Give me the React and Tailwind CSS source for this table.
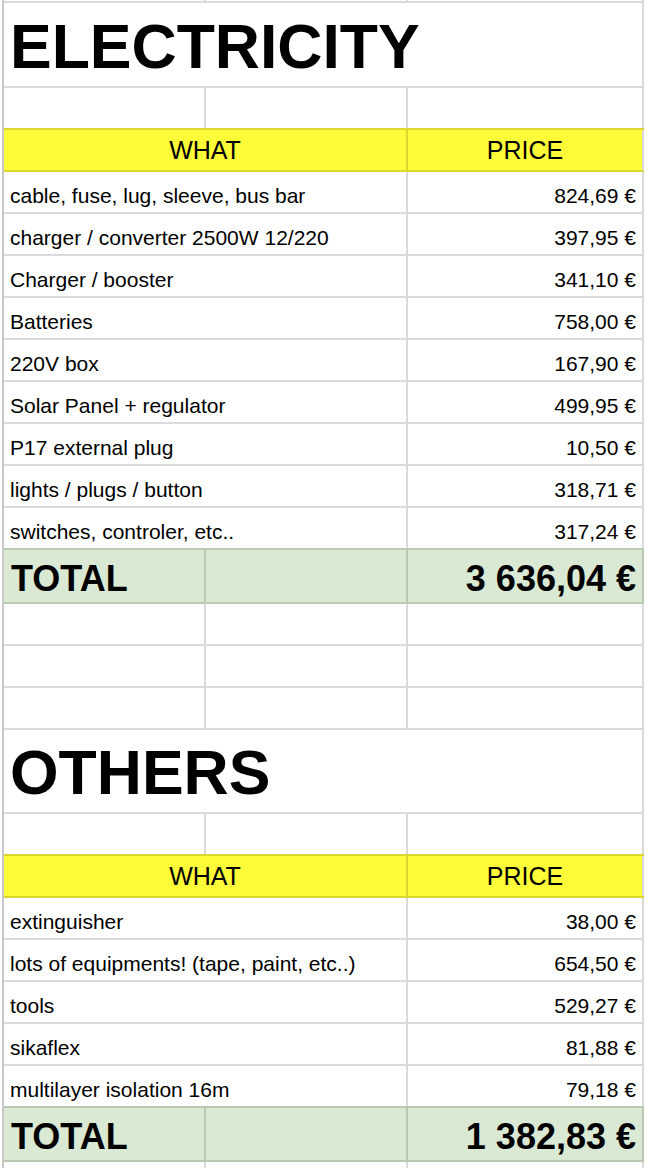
import React from "react";

const FONT = { fontFamily: '"Liberation Sans", Arial, sans-serif' };

const GRAY = "border-[#dadada]";
const YEL = "border-[#dcd62e]";
const GRN = "border-[#b9c9b2]";

function Blank({ h, bottom = GRAY }) {
  return (
    <div className={`flex border-b-2 ${bottom}`} style={{ height: h }}>
      <div className={`w-[202px] border-r-2 ${GRAY}`} />
      <div className={`w-[202px] border-r-2 ${GRAY}`} />
      <div className={`w-[236px] border-r-2 ${GRAY}`} />
    </div>
  );
}

function Title({ text, h }) {
  return (
    <div className={`flex border-b-2 ${GRAY}`} style={{ height: h }}>
      <div className={`w-[640px] border-r-2 ${GRAY} flex items-end pl-[6px] pb-[4px]`}>
        <span className="text-[62.5px] font-bold leading-[72px] text-black">{text}</span>
      </div>
    </div>
  );
}

function Header() {
  return (
    <div className={`flex h-[42px] border-b-2 ${YEL} bg-[#fefb38]`}>
      <div className={`w-[404px] border-r-2 ${YEL} flex items-end justify-center pb-[5px]`}>
        <span className="text-[25px] leading-[29px] text-black">WHAT</span>
      </div>
      <div className={`w-[236px] border-r-2 ${GRAY} flex items-end justify-center pb-[5px]`}>
        <span className="text-[25px] leading-[29px] text-black">PRICE</span>
      </div>
    </div>
  );
}

function Row({ label, price, bottom = GRAY }) {
  return (
    <div className={`flex h-[42px] border-b-2 ${bottom}`}>
      <div className={`w-[404px] border-r-2 ${GRAY} flex items-end pl-[6px] pb-[4px]`}>
        <span className="text-[21px] leading-[24px] text-black whitespace-nowrap">{label}</span>
      </div>
      <div className={`w-[236px] border-r-2 ${GRAY} flex items-end justify-end pr-[6px] pb-[4px]`}>
        <span className="text-[21px] leading-[24px] text-black whitespace-nowrap">{price}</span>
      </div>
    </div>
  );
}

function Total({ amount }) {
  return (
    <div className={`flex h-[54px] border-b-2 ${GRN} bg-[#d9e9d3]`}>
      <div className={`w-[202px] border-r-2 ${GRN} flex items-end pl-[7px] pb-[3px]`}>
        <span className="text-[36px] font-bold leading-[41px] text-black">TOTAL</span>
      </div>
      <div className={`w-[202px] border-r-2 ${GRN}`} />
      <div className={`w-[236px] border-r-2 ${GRN} flex items-end justify-end pr-[6px] pb-[3px]`}>
        <span className="text-[36px] font-bold leading-[41px] text-black whitespace-nowrap">{amount}</span>
      </div>
    </div>
  );
}

const elec = [
  ["cable, fuse, lug, sleeve, bus bar", "824,69 €"],
  ["charger / converter 2500W 12/220", "397,95 €"],
  ["Charger / booster", "341,10 €"],
  ["Batteries", "758,00 €"],
  ["220V box", "167,90 €"],
  ["Solar Panel + regulator", "499,95 €"],
  ["P17 external plug", "10,50 €"],
  ["lights / plugs / button", "318,71 €"],
  ["switches, controler, etc..", "317,24 €"],
];

const others = [
  ["extinguisher", "38,00 €"],
  ["lots of equipments! (tape, paint, etc..)", "654,50 €"],
  ["tools", "529,27 €"],
  ["sikaflex", "81,88 €"],
  ["multilayer isolation 16m", "79,18 €"],
];

export default function App() {
  return (
    <div className="w-[648px] h-[1168px] bg-white overflow-hidden" style={FONT}>
      <div className="ml-[2px] border-l-2 border-[#c8c8c8] w-[642px] h-[1168px]">
        <Blank h={3} />
        <Title text="ELECTRICITY" h={85} />
        <Blank h={42} bottom={YEL} />
        <Header />
        {elec.map(([l, p], i) => (
          <Row key={l} label={l} price={p} bottom={i === elec.length - 1 ? GRN : GRAY} />
        ))}
        <Total amount="3 636,04 €" />
        <Blank h={42} />
        <Blank h={42} />
        <Blank h={42} />
        <Title text="OTHERS" h={84} />
        <Blank h={42} bottom={YEL} />
        <Header />
        {others.map(([l, p], i) => (
          <Row key={l} label={l} price={p} bottom={i === others.length - 1 ? GRN : GRAY} />
        ))}
        <Total amount="1 382,83 €" />
        <Blank h={20} />
      </div>
    </div>
  );
}
